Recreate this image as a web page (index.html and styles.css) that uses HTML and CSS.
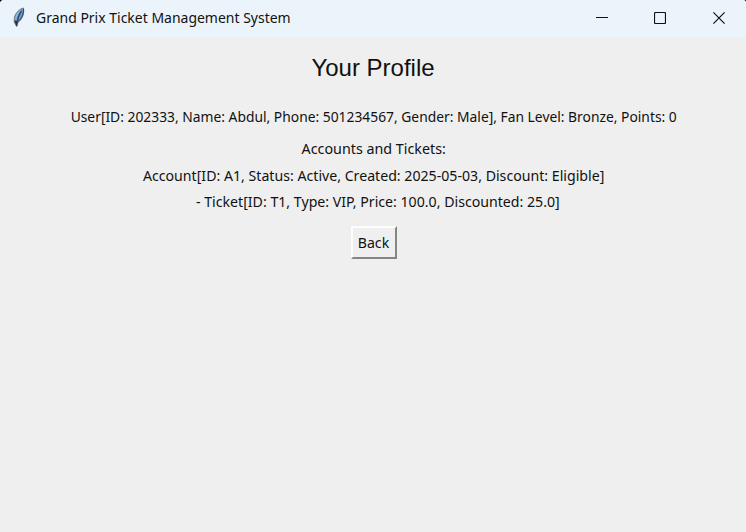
FILE: index.html
```html
<!DOCTYPE html>
<html lang="en">
<head>
<meta charset="utf-8">
<title>Grand Prix Ticket Management System</title>
<link rel="stylesheet" href="styles.css">
</head>
<body>
<div class="window">
  <header class="titlebar">
    <svg class="feather" width="16" height="22" viewBox="0 0 16 22">
      <path d="M12.500 2C8.500 3 4.500 6.500 3.300 12L3.200 16 5.600 20.500 7 16.500C11 13.500 13.500 8 12.500 2Z" fill="#6d94c2" stroke="#6f7c8b" stroke-width="1"/>
      <path d="M12.500 3C12.800 8 11 12.500 7 15.500" fill="none" stroke="#34465c" stroke-width="1"/>
      <path d="M10.500 5C8 8 6.500 12 5.600 20" fill="none" stroke="#27466f" stroke-width="1.200"/>
      <path d="M3.500 14.500 5.400 20 6.200 15.500Z" fill="#25282c"/>
      <path d="M9 4.500C6.500 7 5.200 10 4.700 13" fill="none" stroke="#b3cce5" stroke-width="1"/>
    </svg>
    <h1 class="caption">Grand Prix Ticket Management System</h1>
    <div class="controls">
      <svg width="12" height="12" viewBox="0 0 12 12"><path d="M0 5.500H12"/></svg>
      <svg width="12" height="12" viewBox="0 0 12 12"><rect x=".5" y=".5" width="11" height="11" rx="1"/></svg>
      <svg width="12" height="12" viewBox="0 0 12 12"><path d="M.4.4 11.600 11.600M11.600.4.4 11.600"/></svg>
    </div>
  </header>
  <main class="content">
    <h2 class="heading">Your Profile</h2>
    <p class="line user">User[ID: 202333, Name: Abdul, Phone: 501234567, Gender: Male], Fan Level: Bronze, Points: 0</p>
    <p class="line section">Accounts and Tickets:</p>
    <p class="line account">Account[ID: A1, Status: Active, Created: 2025-05-03, Discount: Eligible]</p>
    <p class="line ticket">- Ticket[ID: T1, Type: VIP, Price: 100.0, Discounted: 25.0]</p>
    <button class="back" type="button"><span>Back</span></button>
  </main>
</div>
</body>
</html>
```
FILE: styles.css
```css
* { box-sizing: border-box; }
body { margin: 0; background: #000; }
.window {
  width: 746px;
  height: 532px;
  overflow: hidden;
  background: #efefef;
  border-radius: 4px 3px 0 0;
  font-family: "Noto Sans", sans-serif;
  color: #111;
}
.titlebar {
  display: flex;
  align-items: center;
  height: 37px;
  padding: 0 21px 0 11px;
  background: #ebf4fa;
}
.feather { margin-right: 9px; margin-bottom: 4px; }
.caption {
  margin: 0 0 4px;
  font-size: 15px;
  line-height: 20px;
  font-weight: 400;
  white-space: nowrap;
  transform: scaleX(.932);
  transform-origin: left;
}
.controls { display: flex; gap: 47px; margin: 0 0 1px auto; }
.controls svg { fill: none; stroke: #111; stroke-width: 1.200; }
.controls svg:first-child { margin-right: -1px; }
.content { display: flex; flex-direction: column; align-items: center; padding-top: 16px; }
.heading {
  margin: 0 0 21px;
  font: 400 24px/29px "Liberation Sans", Arial, sans-serif;
}
.line {
  margin: 0;
  font-size: 15px;
  line-height: 26px;
  white-space: nowrap;
  transform: scaleX(.943);
}
.user { margin: 0 0 6px 2px; transform: scaleX(.922); }
.section { margin: 0 0 1px 1px; transform: scaleX(.953); }
.account { margin-left: 1px; }
.ticket { margin-left: 9px; }
.back {
  width: 46px;
  height: 33px;
  margin: 12px 0 0 2px;
  padding: 0 1px 2px 0;
  background: #efefef;
  border: 2px solid;
  border-color: #fdfdfd #858585 #858585 #fdfdfd;
  font: 400 15px/26px "Noto Sans", sans-serif;
  color: #111;
}
.back span { display: block; margin: 0 -2px; transform: scaleX(.94); }
```
